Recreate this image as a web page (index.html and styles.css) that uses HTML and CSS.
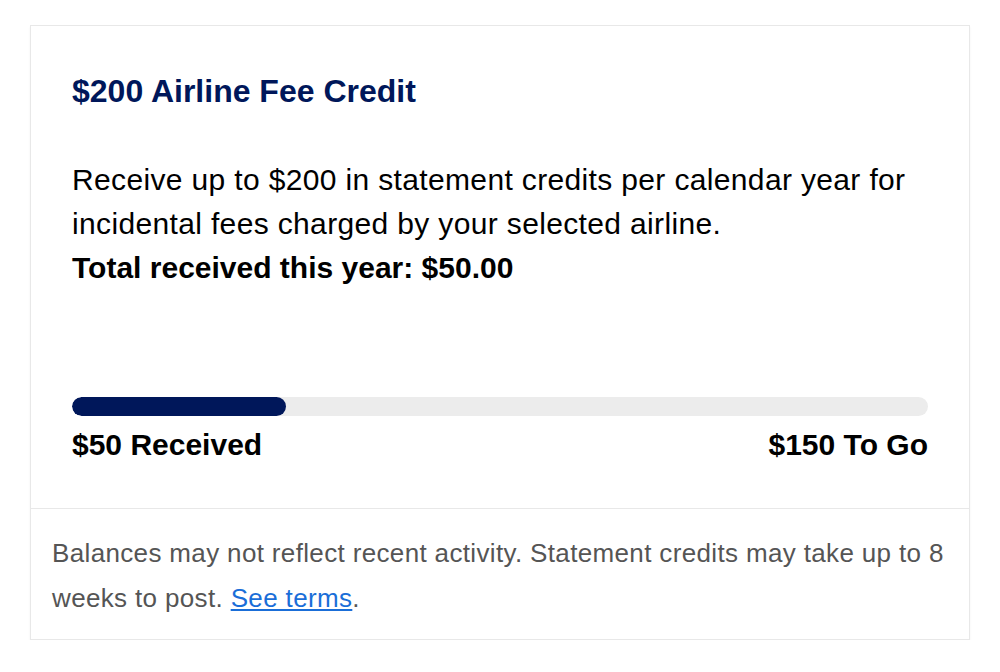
FILE: index.html
```html
<!DOCTYPE html>
<html>

<head>
	<meta charset="utf-8" />
	<title>Airline Fee Credit</title>
	<link rel="stylesheet" href="styles.css">
</head>

<body>
	<div class="card">
		<div class="card-body">
			<h2 class="title">$200 Airline Fee Credit</h2>
			<p class="desc">Receive up to $200 in statement credits per calendar year for incidental fees charged by your selected airline.<br>
				<strong>Total received this year: $50.00</strong></p>
			<div class="progress">
				<div class="progress-fill" style="width: 25%"></div>
			</div>
			<div class="progress-labels">
				<span>$50 Received</span>
				<span>$150 To Go</span>
			</div>
		</div>
		<div class="card-foot">
			Balances may not reflect recent activity. Statement credits may take up to 8 weeks to post. <a href="javascript:;">See terms</a>.
		</div>
	</div>
</body>

</html>
```

FILE: styles.css
```css
body,
div,
h2,
p {
	margin: 0;
	padding: 0;
}

body {
	background: #fff;
	color: #000;
	font-family: "Liberation Sans", Arial, sans-serif;
}

.card {
	width: 938px;
	margin: 25px 0 0 30px;
	border: 1px solid #e8e8e8;
	box-shadow: 0 2px 2px rgba(0, 0, 0, 0.06);
}

.card-body {
	padding: 45px 41px 43px;
	border-bottom: 1px solid #e8e8e8;
}

.title {
	color: #00175a;
	font-size: 32px;
	line-height: 40px;
	font-weight: bold;
}

.desc {
	margin-top: 47px;
	font-size: 30px;
	line-height: 44px;
	letter-spacing: 0.35px;
}

.desc strong {
	letter-spacing: 0;
}

.progress {
	height: 19px;
	margin-top: 107px;
	background: #ececec;
	border-radius: 10px;
	overflow: hidden;
}

.progress-fill {
	height: 100%;
	background: #00175a;
	border-radius: 10px;
}

.progress-labels {
	display: flex;
	justify-content: space-between;
	margin-top: 9px;
	font-size: 30px;
	line-height: 40px;
	font-weight: bold;
}

.card-foot {
	padding: 22px 21px 18px;
	color: #555;
	font-size: 26px;
	line-height: 45px;
	letter-spacing: 0.35px;
}

.card-foot a {
	color: #1a6ed8;
}
```
